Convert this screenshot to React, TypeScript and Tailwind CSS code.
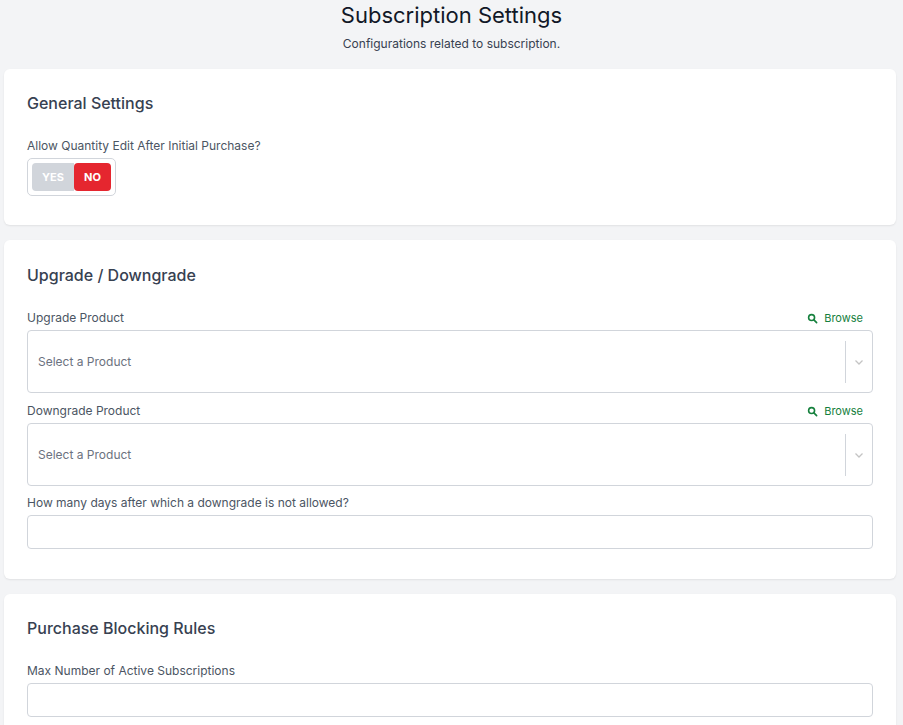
import React from "react";

const Browse = () => (
  <span className="flex items-center gap-[6px] text-[11px] text-[#15803d]">
    <svg width="11" height="11" viewBox="0 0 24 24" fill="none" stroke="currentColor" strokeWidth="3.5" strokeLinecap="round"><circle cx="10" cy="10" r="6.5"/><path d="M15 15l6 6"/></svg>
    Browse
  </span>
);

const Select = () => (
  <div className="h-[63px] border border-[#d1d5db] rounded-[4px] flex items-center bg-white">
    <span className="flex-1 pl-[10px] text-[12px] text-[#6b7280]">Select a Product</span>
    <div className="w-px h-[42px] bg-[#d1d5db]" />
    <div className="w-[26px] flex justify-center text-[#c4c4c4]">
      <svg width="12" height="12" viewBox="0 0 24 24" fill="none" stroke="currentColor" strokeWidth="2.5"><path d="M5 9l7 7 7-7"/></svg>
    </div>
  </div>
);

const Input = () => <div className="h-[34px] border border-[#d1d5db] rounded-[4px] bg-white" />;

export default function App() {
  return (
    <div className="min-h-[725px] bg-[#f3f4f6] px-[4px] pb-4 text-[#374151]" style={{ fontFamily: "Inter, 'Noto Sans', sans-serif" }}>
      <div className="text-center pt-[1px] pb-[16px]">
        <h1 className="text-[22px] leading-[28px] text-[#111827]">Subscription Settings</h1>
        <p className="text-[12px] mt-[6px] text-[#374151]">Configurations related to subscription.</p>
      </div>
      <div className="flex flex-col gap-[15px] pr-[3px]">
        <div className="bg-white rounded-[6px] shadow-[0_1px_2px_rgba(0,0,0,0.08)] px-[23px] pt-[24px] pb-[29px]">
          <h2 className="text-[16px] leading-[20px] font-medium">General Settings</h2>
          <div className="text-[12px] mt-[24px] text-[#4b5563]">Allow Quantity Edit After Initial Purchase?</div>
          <div className="mt-[3px] inline-flex p-[4px] border border-[#d1d5db] rounded-[5px]">
            <span className="w-[42px] h-[28px] flex items-center justify-center bg-[#d1d5db] text-white text-[11px] font-bold rounded-l-[4px]">YES</span>
            <span className="w-[37px] h-[28px] flex items-center justify-center bg-[#e5262f] text-white text-[11px] font-bold rounded-[4px]">NO</span>
          </div>
        </div>
        <div className="bg-white rounded-[6px] shadow-[0_1px_2px_rgba(0,0,0,0.08)] px-[23px] pt-[25px] pb-[30px]">
          <h2 className="text-[16px] leading-[20px] font-medium">Upgrade / Downgrade</h2>
          <div className="mt-[24px] flex justify-between items-center pr-[10px] text-[12px] text-[#4b5563] h-[18px]"><span>Upgrade Product</span><Browse /></div>
          <div className="mt-[3px]"><Select /></div>
          <div className="mt-[9px] flex justify-between items-center pr-[10px] text-[12px] text-[#4b5563] h-[18px]"><span>Downgrade Product</span><Browse /></div>
          <div className="mt-[3px]"><Select /></div>
          <div className="mt-[8px] text-[12px] text-[#4b5563] h-[18px]">How many days after which a downgrade is not allowed?</div>
          <div className="mt-[3px]"><Input /></div>
        </div>
        <div className="bg-white rounded-[6px] shadow-[0_1px_2px_rgba(0,0,0,0.08)] px-[23px] pt-[24px] pb-[30px]">
          <h2 className="text-[16px] leading-[20px] font-medium">Purchase Blocking Rules</h2>
          <div className="mt-[24px] text-[12px] text-[#4b5563] h-[18px]">Max Number of Active Subscriptions</div>
          <div className="mt-[3px]"><Input /></div>
        </div>
      </div>
    </div>
  );
}
